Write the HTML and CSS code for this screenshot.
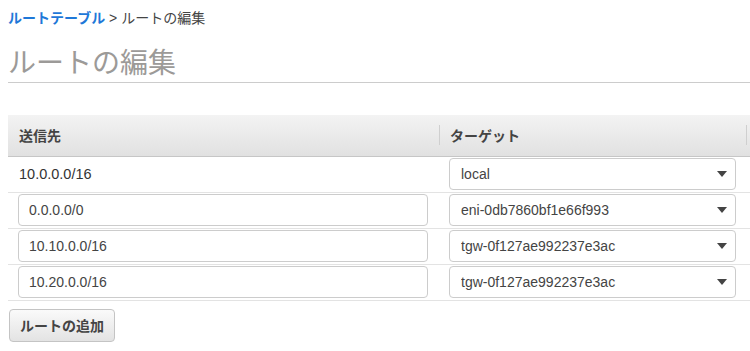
FILE: index.html
```html
<!DOCTYPE html>
<html lang="ja">
<head>
    <meta charset="UTF-8">
    <title>ルートの編集</title>
    <link rel="stylesheet" href="styles.css">
</head>
<body>
    <div class="breadcrumb">
        <a href="#">ルートテーブル</a> <span class="sep">&gt;</span> ルートの編集
    </div>

    <h1 class="page-title">ルートの編集</h1>

    <table class="route-table">
        <thead>
            <tr>
                <th class="col-dest">送信先</th>
                <th class="col-target">ターゲット</th>
            </tr>
        </thead>
        <tbody>
            <tr>
                <td class="static">10.0.0.0/16</td>
                <td>
                    <div class="select-wrap">
                        <select><option>local</option></select>
                    </div>
                </td>
            </tr>
            <tr>
                <td><input type="text" value="0.0.0.0/0"></td>
                <td>
                    <div class="select-wrap">
                        <select><option>eni-0db7860bf1e66f993</option></select>
                    </div>
                </td>
            </tr>
            <tr>
                <td><input type="text" value="10.10.0.0/16"></td>
                <td>
                    <div class="select-wrap">
                        <select><option>tgw-0f127ae992237e3ac</option></select>
                    </div>
                </td>
            </tr>
            <tr>
                <td><input type="text" value="10.20.0.0/16"></td>
                <td>
                    <div class="select-wrap">
                        <select><option>tgw-0f127ae992237e3ac</option></select>
                    </div>
                </td>
            </tr>
        </tbody>
    </table>

    <button class="add-btn">ルートの追加</button>
</body>
</html>
```

FILE: styles.css
```css
* {
    box-sizing: border-box;
}

html {
    overflow: hidden;
}

body {
    margin: 8px 0 8px 8px;
    font-family: "Liberation Sans", Arial, "Noto Sans CJK JP", sans-serif;
    font-size: 14px;
    color: #444;
    background: #fff;
}

.breadcrumb {
    line-height: 20px;
    color: #444;
}

.breadcrumb a {
    color: #1f78d8;
    font-weight: bold;
    text-decoration: none;
}

.page-title {
    margin: 19px 0 0;
    padding-bottom: 1px;
    font-size: 28px;
    font-weight: normal;
    line-height: 34px;
    color: #9c9a98;
    border-bottom: 1px solid #ccc;
}

.route-table {
    width: 100%;
    margin-top: 32px;
    border-collapse: collapse;
}

.route-table th {
    position: relative;
    height: 41px;
    padding: 0 11px;
    text-align: left;
    font-weight: bold;
    font-size: 14px;
    color: #444;
    background: linear-gradient(#f3f3f3, #e1e1e1);
    border-bottom: 1px solid #c6c6c6;
}

.col-dest {
    width: 431px;
}

.col-target::before,
.col-target::after {
    content: "";
    position: absolute;
    top: 10px;
    width: 1px;
    height: 20px;
    background: #cfcfcf;
}

.col-target::before {
    left: 0;
}

.col-target::after {
    right: 3px;
}

.route-table td {
    height: 36px;
    padding: 1px 10px 2px;
    vertical-align: middle;
    border-bottom: 1px solid #e3e3e3;
}

.route-table td.static {
    padding-left: 11px;
    color: #333;
    font-size: 14.5px;
}

.route-table input {
    display: block;
    width: 410px;
    height: 32px;
    padding: 0 10px;
    font: inherit;
    color: #444;
    border: 1px solid #ccc;
    border-radius: 4px;
    background: #fff;
}

.select-wrap {
    position: relative;
    width: 287px;
}

.select-wrap select {
    display: block;
    width: 100%;
    height: 32px;
    padding: 0 30px 0 11px;
    font: inherit;
    color: #444;
    border: 1px solid #ccc;
    border-radius: 4px;
    background: #fff;
    appearance: none;
    -webkit-appearance: none;
}

.select-wrap::after {
    content: "";
    position: absolute;
    top: 13px;
    right: 9px;
    border-left: 5px solid transparent;
    border-right: 5px solid transparent;
    border-top: 6px solid #444;
    pointer-events: none;
}

.add-btn {
    display: block;
    margin-top: 8px;
    margin-left: 1px;
    height: 33px;
    padding: 0 10px;
    font: inherit;
    font-weight: bold;
    color: #444;
    border: 1px solid #c4c4c4;
    border-radius: 4px;
    background: linear-gradient(#fafafa, #e3e3e3);
    cursor: pointer;
}
```
